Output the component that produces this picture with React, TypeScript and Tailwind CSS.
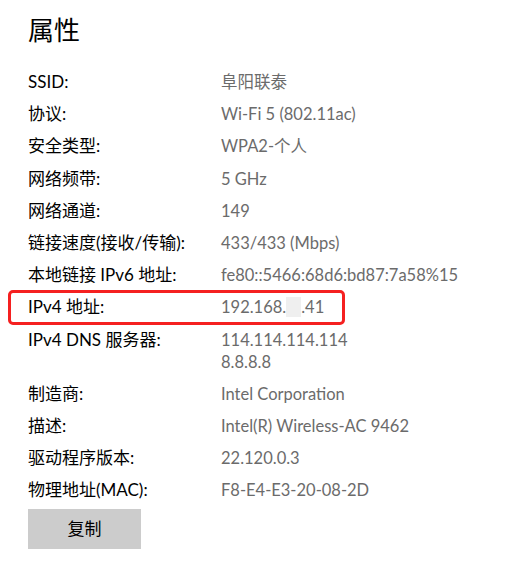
const rows: { label: string; value: React.ReactNode }[] = [
  { label: 'SSID:', value: '阜阳联泰' },
  { label: '协议:', value: 'Wi-Fi 5 (802.11ac)' },
  { label: '安全类型:', value: 'WPA2-个人' },
  { label: '网络频带:', value: '5 GHz' },
  { label: '网络通道:', value: '149' },
  { label: '链接速度(接收/传输):', value: '433/433 (Mbps)' },
  { label: '本地链接 IPv6 地址:', value: 'fe80::5466:68d6:bd87:7a58%15' },
];

const rows2: { label: string; value: React.ReactNode }[] = [
  {
    label: 'IPv4 DNS 服务器:',
    value: (
      <>
        <div>114.114.114.114</div>
        <div>8.8.8.8</div>
      </>
    ),
  },
  { label: '制造商:', value: 'Intel Corporation' },
  { label: '描述:', value: 'Intel(R) Wireless-AC 9462' },
  { label: '驱动程序版本:', value: '22.120.0.3' },
  { label: '物理地址(MAC):', value: 'F8-E4-E3-20-08-2D' },
];

function Row({ label, value }: { label: string; value: React.ReactNode }) {
  return (
    <div className="flex">
      <div className="w-[193px] shrink-0 text-[#000]">{label}</div>
      <div className="text-[16.5px] text-[#6b6b6b]">{value}</div>
    </div>
  );
}

export default function App() {
  return (
    <div
      className="w-[514px] h-[561px] bg-white overflow-hidden pl-[28px] pt-[12px] text-[17px] leading-[22px]"
      style={{ fontFamily: 'Lato, "Noto Sans CJK SC", sans-serif' }}
    >
      <h1 className="text-[26px] leading-[36px] text-[#000]">属性</h1>
      <div className="mt-[23px] flex flex-col gap-[10.2px]">
        {rows.map((r) => (
          <Row key={r.label} {...r} />
        ))}
        <div className="relative">
          <Row
            label="IPv4 地址:"
            value={
              <span className="flex items-center">
                192.168.
                <span className="inline-block w-[15px] h-[20px] bg-[#efefef]" />
                .41
              </span>
            }
          />
          <div className="absolute left-[-20px] top-[-6px] w-[337px] h-[35px] border-[3px] border-[#f52020] rounded-[5px]" />
        </div>
        {rows2.map((r) => (
          <Row key={r.label} {...r} />
        ))}
      </div>
      <button className="mt-[8px] w-[113px] h-[40px] bg-[#cccccc] text-[#000] text-[17px]">
        复制
      </button>
    </div>
  );
}
